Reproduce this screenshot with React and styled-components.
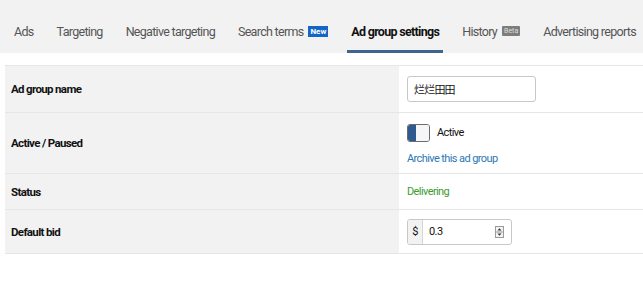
import React from "react";
import styled, { createGlobalStyle } from "styled-components";

const GlobalStyle = createGlobalStyle`
  body {
    margin: 0;
    background: #fff;
    font-family: "Roboto", "Noto Sans CJK SC", sans-serif;
  }
`;

const tabs = [
  { label: "Ads" },
  { label: "Targeting" },
  { label: "Negative targeting" },
  { label: "Search terms", badge: "new" },
  { label: "Ad group settings", active: true },
  { label: "History", badge: "beta" },
  { label: "Advertising reports" },
];

export default function App() {
  return (
    <Page>
      <GlobalStyle />
      <TabBar>
        {tabs.map((t) => (
          <Tab key={t.label} $active={t.active}>
            {t.label}
            {t.badge === "new" && <NewBadge>New</NewBadge>}
            {t.badge === "beta" && <BetaBadge>Beta</BetaBadge>}
          </Tab>
        ))}
      </TabBar>

      <Table>
        <Row $h={47}>
          <Label>Ad group name</Label>
          <Value>
            <NameInput defaultValue="烂烂田田" />
          </Value>
        </Row>
        <Row $h={61}>
          <Label>Active / Paused</Label>
          <Value $stack>
            <ToggleLine>
              <Toggle>
                <ToggleOn />
                <ToggleOff />
              </Toggle>
              <span>Active</span>
            </ToggleLine>
            <Link>Archive this ad group</Link>
          </Value>
        </Row>
        <Row $h={36}>
          <Label>Status</Label>
          <Value>
            <Delivering>Delivering</Delivering>
          </Value>
        </Row>
        <Row $h={44}>
          <Label>Default bid</Label>
          <Value>
            <BidBox>
              <Currency>$</Currency>
              <BidValue>0.3</BidValue>
              <Spinner>
                <svg width="9" height="12" viewBox="0 0 9 12">
                  <rect x="0.5" y="0.5" width="8" height="11" fill="#f4f4f4" stroke="#9a9a9a" />
                  <line x1="0.5" y1="6" x2="8.5" y2="6" stroke="#9a9a9a" />
                  <path d="M2.5 4.5 L4.5 2.2 L6.5 4.5 Z" fill="#333" />
                  <path d="M2.5 7.5 L4.5 9.8 L6.5 7.5 Z" fill="#333" />
                </svg>
              </Spinner>
            </BidBox>
          </Value>
        </Row>
      </Table>
    </Page>
  );
}

const Page = styled.div`
  width: 643px;
  height: 294px;
  overflow: hidden;
`;

const TabBar = styled.div`
  height: 53px;
  background: #f2f2f2;
  display: flex;
  align-items: flex-end;
  gap: 15px;
  padding-left: 10px;
  box-sizing: border-box;
`;

const Tab = styled.div`
  display: flex;
  align-items: center;
  height: 39px;
  padding: 0 4px 2px;
  box-sizing: border-box;
  font-size: 12.5px;
  letter-spacing: -0.7px;
  color: ${(p) => (p.$active ? "#111" : "#555")};
  font-weight: ${(p) => (p.$active ? 700 : 400)};
  border-bottom: 3px solid ${(p) => (p.$active ? "#3c6591" : "transparent")};
  white-space: nowrap;
`;

const NewBadge = styled.span`
  margin-left: 5px;
  background: #1466c6;
  color: #fff;
  font-size: 8px;
  font-weight: 700;
  letter-spacing: 0;
  padding: 1px 2px;
  line-height: 9px;
`;

const BetaBadge = styled.span`
  margin-left: 5px;
  background: #7d7d7d;
  color: #ddd;
  font-size: 7px;
  letter-spacing: 0;
  padding: 1px 2px;
  line-height: 8px;
  border-radius: 1px;
`;

const Table = styled.div`
  margin: 12px 0 0 5px;
  border-top: 1px solid #e6e6e6;
`;

const Row = styled.div`
  display: grid;
  grid-template-columns: 394px 1fr;
  height: ${(p) => p.$h}px;
  border-bottom: 1px solid #e6e6e6;
  box-sizing: border-box;
`;

const Label = styled.div`
  background: #f2f2f2;
  display: flex;
  align-items: center;
  padding-left: 6px;
  font-size: 11.5px;
  letter-spacing: -0.65px;
  font-weight: 700;
  color: #111;
`;

const Value = styled.div`
  display: flex;
  flex-direction: ${(p) => (p.$stack ? "column" : "row")};
  justify-content: ${(p) => (p.$stack ? "center" : "flex-start")};
  align-items: ${(p) => (p.$stack ? "flex-start" : "center")};
  padding-left: 8px;
  font-size: 11px;
  letter-spacing: -0.6px;
  color: #111;
`;

const NameInput = styled.input`
  width: 129px;
  height: 26px;
  box-sizing: border-box;
  border: 1px solid #c8c8c8;
  border-radius: 3px;
  padding: 0 6px;
  font-size: 11px;
  font-family: "Noto Sans CJK SC", sans-serif;
  letter-spacing: -0.8px;
  color: #111;
  outline: none;
`;

const ToggleLine = styled.div`
  display: flex;
  align-items: center;
  gap: 7px;
  margin-top: 2px;
`;

const Toggle = styled.div`
  display: flex;
  width: 23px;
  height: 18px;
  border: 1px solid #6b6b6b;
  border-radius: 3px;
  overflow: hidden;
  box-sizing: border-box;
`;

const ToggleOn = styled.div`
  width: 8px;
  background: #2e5b8f;
`;

const ToggleOff = styled.div`
  flex: 1;
  background: #f4f6f8;
`;

const Link = styled.div`
  margin-top: 10px;
  color: #2b78b4;
`;

const Delivering = styled.span`
  color: #3d9b32;
`;

const BidBox = styled.div`
  display: flex;
  align-items: center;
  width: 105px;
  height: 26px;
  box-sizing: border-box;
  border: 1px solid #c8c8c8;
  border-radius: 3px;
  overflow: hidden;
`;

const Currency = styled.div`
  width: 14px;
  height: 100%;
  display: flex;
  align-items: center;
  justify-content: center;
  background: #f2f2f2;
  border-right: 1px solid #d6d6d6;
`;

const BidValue = styled.div`
  flex: 1;
  padding-left: 6px;
`;

const Spinner = styled.div`
  display: flex;
  margin-right: 7px;
`;
